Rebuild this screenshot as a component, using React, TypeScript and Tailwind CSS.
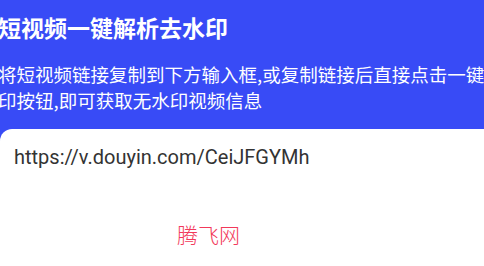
import React from "react";

export default function App() {
  const cjk = { fontFamily: '"Noto Sans CJK SC", "Noto Sans", sans-serif' };
  return (
    <div className="w-[484px] h-[266px] overflow-hidden bg-[#384bf6] flex flex-col" style={cjk}>
      <div className="pt-[12px] -ml-[2px] text-white">
        <div className="text-[23px] leading-[30px] font-bold whitespace-nowrap">短视频一键解析去水印</div>
        <div className="mt-[19px] text-[18.5px] leading-[26px] whitespace-nowrap">
          <div>将短视频链接复制到下方输入框,或复制链接后直接点击一键解析去水</div>
          <div>印按钮,即可获取无水印视频信息</div>
        </div>
      </div>
      <div className="mt-[16px] flex-1 bg-white rounded-tl-[12px] flex flex-col">
        <div
          className="pt-[14px] pl-[14px] text-[20px] leading-[28px] text-[#333333]"
          style={{ fontFamily: 'Roboto, "Noto Sans CJK SC", sans-serif' }}
        >
          https://v.douyin.com/CeiJFGYMh
        </div>
        <div className="mt-[49px] pl-[177px] text-[21px] leading-[28px] font-light text-[#f2395a]">
          腾飞网
        </div>
      </div>
    </div>
  );
}
